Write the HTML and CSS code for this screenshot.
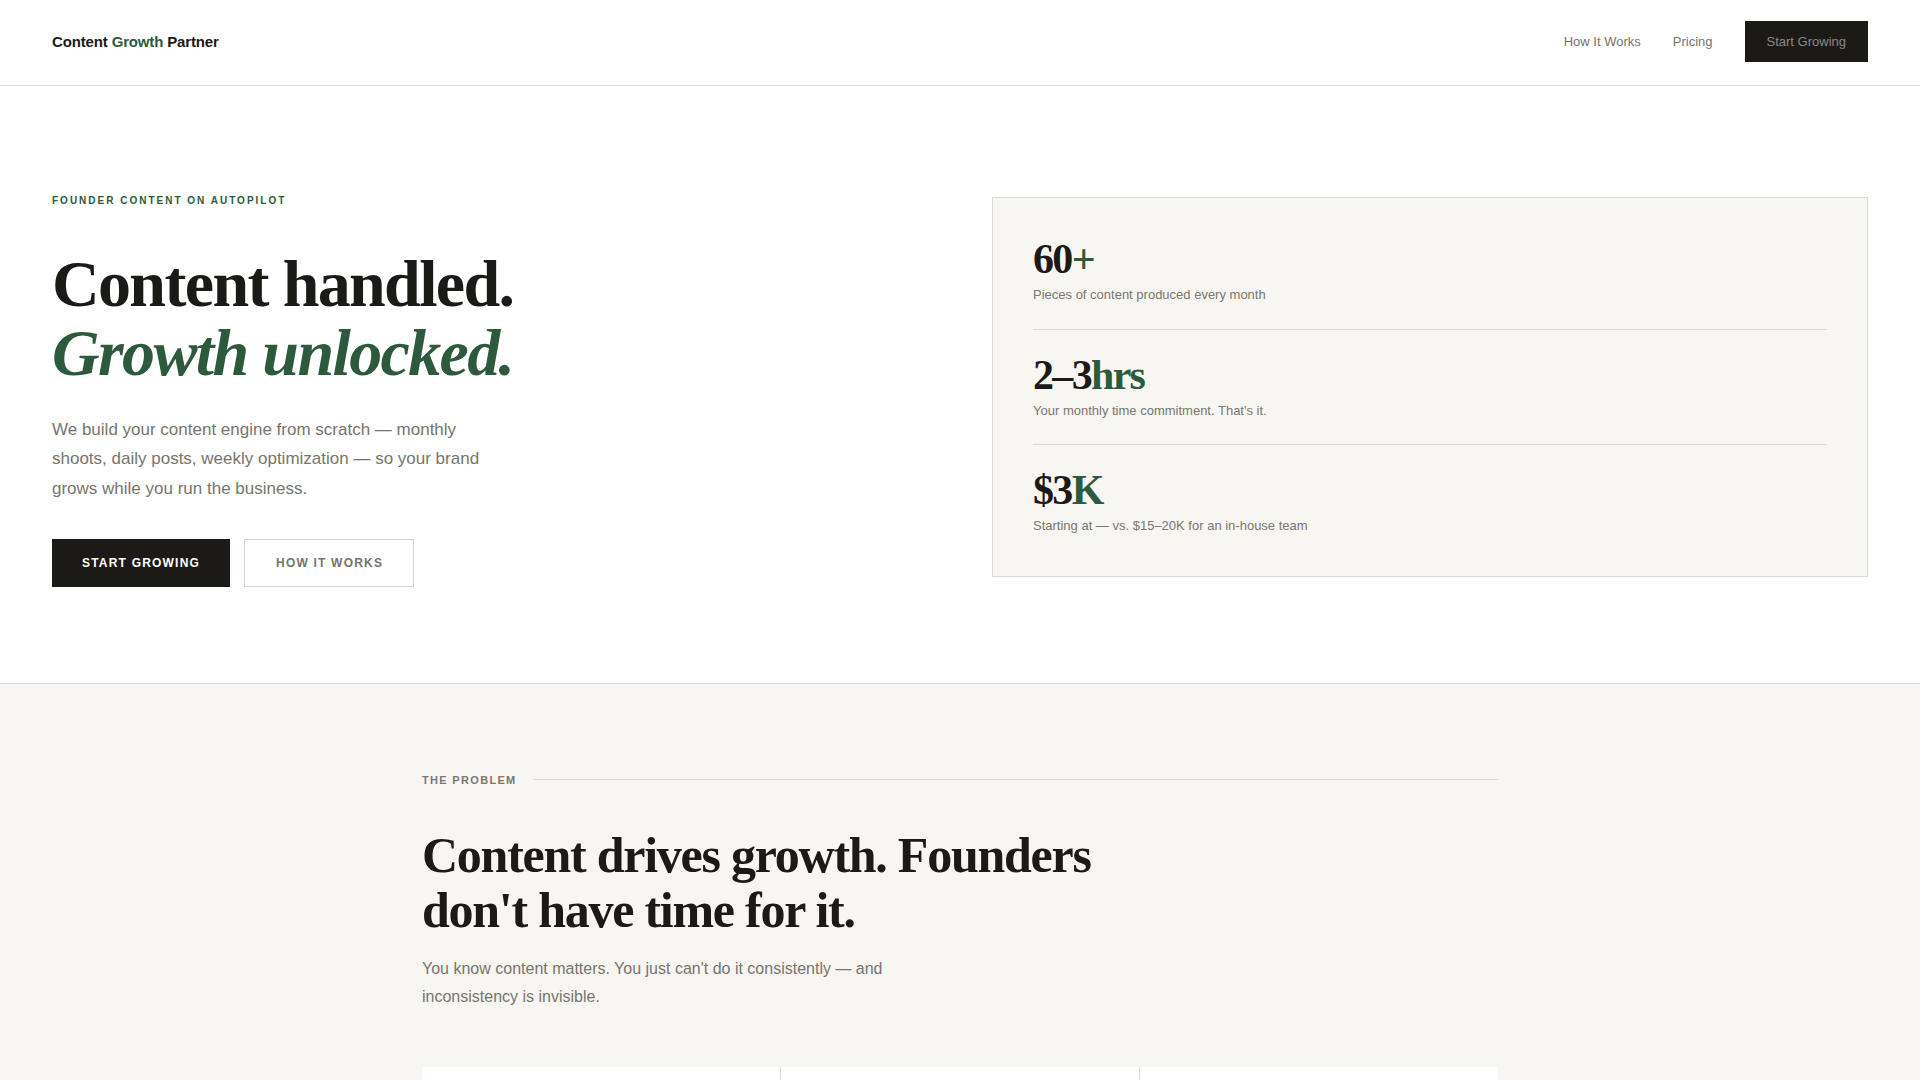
FILE: index.html
```html
<!DOCTYPE html>
<html lang="en">
<head>
<meta charset="utf-8">
<title>Content Growth Partner</title>
<link rel="stylesheet" href="styles.css">
</head>
<body>
<header class="nav">
  <a class="logo" href="#">Content <span class="green">Growth</span> Partner</a>
  <nav class="nav-links">
    <a href="#how">How It Works</a>
    <a href="#pricing">Pricing</a>
    <a class="nav-cta" href="#start">Start Growing</a>
  </nav>
</header>

<section class="hero">
  <div class="hero-left">
    <p class="eyebrow">Founder content on autopilot</p>
    <h1 class="hero-title">Content handled.<br><em>Growth unlocked.</em></h1>
    <p class="hero-text">We build your content engine from scratch — monthly shoots, daily posts, weekly optimization — so your brand grows while you run the business.</p>
    <div class="hero-actions">
      <a class="btn btn-dark" href="#start">Start Growing</a>
      <a class="btn btn-outline" href="#how">How It Works</a>
    </div>
  </div>
  <div class="hero-right">
    <div class="stats">
      <div class="stat">
        <div class="stat-num">60<span class="green">+</span></div>
        <div class="stat-label">Pieces of content produced every month</div>
      </div>
      <div class="stat">
        <div class="stat-num">2–3<span class="green">hrs</span></div>
        <div class="stat-label">Your monthly time commitment. That's it.</div>
      </div>
      <div class="stat">
        <div class="stat-num">$3<span class="green">K</span></div>
        <div class="stat-label">Starting at — vs. $15–20K for an in-house team</div>
      </div>
    </div>
  </div>
</section>

<section class="problem">
  <div class="container">
    <div class="section-label"><span>The Problem</span><i class="rule"></i></div>
    <h2 class="section-title">Content drives growth. Founders don't have time for it.</h2>
    <p class="section-text">You know content matters. You just can't do it consistently — and inconsistency is invisible.</p>
    <div class="cards">
      <div class="card">
        <h3>No time</h3>
        <p>Running the business takes every hour you have.</p>
      </div>
      <div class="card">
        <h3>No system</h3>
        <p>Posting happens in bursts, then stops for weeks.</p>
      </div>
      <div class="card">
        <h3>No team</h3>
        <p>Hiring in-house costs $15–20K a month.</p>
      </div>
    </div>
  </div>
</section>
</body>
</html>
```

FILE: styles.css
```css
* { box-sizing: border-box; }

html, body {
  margin: 0;
  padding: 0;
}

body {
  font-family: "Liberation Sans", Arial, sans-serif;
  color: #1c1a17;
  background: #ffffff;
}

a { text-decoration: none; color: inherit; }

.green { color: #2d5a3d; }

/* NAV */
.nav {
  height: 86px;
  padding: 0 52px 2px;
  display: flex;
  align-items: center;
  justify-content: space-between;
  border-bottom: 1px solid #e2dfd8;
}

.logo {
  font-size: 15px;
  font-weight: 700;
  letter-spacing: -0.01em;
  color: #1c1a17;
}

.nav-links {
  display: flex;
  align-items: center;
  gap: 32px;
  font-size: 13px;
}

.nav-links a { color: #77746d; line-height: 15px; }

.nav-links .nav-cta {
  background: #1c1a16;
  color: #8c8981;
  padding: 13px 22px;
}

/* HERO */
.hero {
  display: grid;
  grid-template-columns: 1fr 1fr;
  gap: 64px;
  align-items: start;
  padding: 109px 52px 96px;
  border-bottom: 1px solid #e0ddd6;
}

.eyebrow {
  margin: 0 0 42px;
  font-size: 10px;
  line-height: 12px;
  font-weight: 700;
  letter-spacing: 0.2em;
  text-transform: uppercase;
  color: #2d5a3d;
}

.hero-title {
  margin: 0;
  font-family: "Liberation Serif", "Times New Roman", serif;
  font-size: 66px;
  line-height: 1.05;
  font-weight: 700;
  letter-spacing: -0.025em;
  color: #1c1a17;
}

.hero-title em {
  color: #2d5a3d;
  font-style: italic;
}

.hero-text {
  margin: 27px 0 0;
  max-width: 448px;
  font-size: 17px;
  line-height: 1.75;
  color: #78756d;
}

.hero-actions {
  display: flex;
  gap: 14px;
  margin-top: 35px;
}

.btn {
  display: inline-block;
  padding: 16px 29px;
  font-size: 12px;
  line-height: 14px;
  font-weight: 700;
  letter-spacing: 0.1em;
  text-transform: uppercase;
  border: 1px solid transparent;
}

.btn-dark {
  background: #1c1a16;
  border-color: #1c1a16;
  color: #ffffff;
}

.btn-outline {
  padding: 16px 30px 16px 31px;
  background: #ffffff;
  border-color: #d6d3cc;
  color: #77746c;
}

.hero-right {
  padding-top: 2px;
}

.stats {
  background: #f7f6f2;
  border: 1px solid #dcd9d2;
  padding: 40px;
}

.stat {
  padding: 24px 0;
  border-bottom: 1px solid #dcd9d2;
}

.stat:first-child { padding-top: 0; }
.stat:last-child { padding-bottom: 0; border-bottom: 0; }

.stat-num {
  font-family: "Liberation Serif", "Times New Roman", serif;
  font-size: 42px;
  line-height: 1;
  font-weight: 700;
  letter-spacing: -0.04em;
  color: #1c1a17;
  margin-bottom: 5px;
}

.stat-label {
  font-size: 13px;
  line-height: 1.5;
  color: #7a776f;
}

/* PROBLEM */
.problem {
  background: #f7f6f2;
  padding: 90px 0 80px;
}

.container {
  max-width: 1076px;
  margin: 0 auto;
}

.section-label {
  display: flex;
  align-items: center;
  gap: 16px;
  font-size: 11px;
  font-weight: 700;
  letter-spacing: 0.12em;
  text-transform: uppercase;
  color: #7a776f;
}

.section-label .rule {
  flex: 1;
  height: 1px;
  background: #dcd9d2;
}

.section-title {
  margin: 42px 0 0;
  max-width: 720px;
  font-family: "Liberation Serif", "Times New Roman", serif;
  font-size: 50px;
  line-height: 1.1;
  font-weight: 700;
  letter-spacing: -0.025em;
  color: #1c1a17;
}

.section-text {
  margin: 17px 0 0;
  max-width: 500px;
  font-size: 16px;
  line-height: 1.75;
  color: #78756d;
}

.cards {
  margin-top: 56px;
  display: grid;
  grid-template-columns: repeat(3, 1fr);
  gap: 1px;
  background: #e0ddd6;
}

.card {
  background: #ffffff;
  padding: 40px;
  min-height: 220px;
}

.card h3 {
  margin: 0 0 12px;
  font-family: "Liberation Serif", "Times New Roman", serif;
  font-size: 22px;
}

.card p {
  margin: 0;
  font-size: 14px;
  line-height: 1.6;
  color: #78756d;
}
```
